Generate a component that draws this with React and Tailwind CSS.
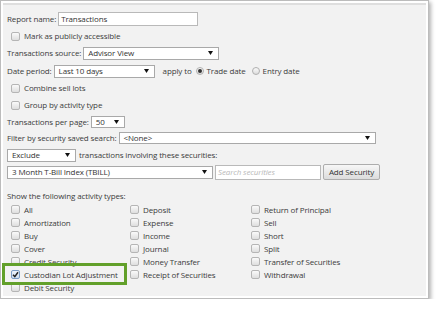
import React from "react";

const Arrow = () => (
  <svg width="5" height="4" viewBox="0 0 5 4" className="shrink-0">
    <polygon points="0,0 5,0 2.5,4" fill="#111" />
  </svg>
);

const Select = ({ value, className }) => (
  <div
    className={
      "flex items-center justify-between bg-white border border-[#a9a9a9] pl-[4px] pr-[5px] text-[#333] " +
      className
    }
  >
    <span className="whitespace-nowrap">{value}</span>
    <Arrow />
  </div>
);

const Box = ({ checked }) =>
  checked ? (
    <span className="w-[9px] h-[9px] rounded-[2px] border border-[#7a9cc6] bg-gradient-to-b from-[#eef4fb] to-[#cfdff2] flex items-center justify-center shrink-0">
      <svg width="7" height="7" viewBox="0 0 7 7">
        <path d="M1 3.8 L2.8 5.6 L6 1.2" stroke="#222" strokeWidth="1.5" fill="none" />
      </svg>
    </span>
  ) : (
    <span className="w-[9px] h-[9px] rounded-[2px] border border-[#b5b5b5] bg-gradient-to-b from-[#fafafa] to-[#dedede] shrink-0" />
  );

const Check = ({ label, checked }) => (
  <div className="flex items-center h-full">
    <Box checked={checked} />
    <span className="ml-[4px] whitespace-nowrap">{label}</span>
  </div>
);

const Radio = ({ checked }) => (
  <span className="w-[8px] h-[8px] rounded-full border border-[#b0b0b0] bg-gradient-to-b from-[#fafafa] to-[#dcdcdc] flex items-center justify-center shrink-0">
    {checked && <span className="w-[4px] h-[4px] rounded-full bg-[#333]" />}
  </span>
);

const cols = [
  ["All", "Amortization", "Buy", "Cover", "Credit Security", "Custodian Lot Adjustment", "Debit Security"],
  ["Deposit", "Expense", "Income", "Journal", "Money Transfer", "Receipt of Securities"],
  ["Return of Principal", "Sell", "Short", "Split", "Transfer of Securities", "Withdrawal"],
];

export default function App() {
  return (
    <div
      className="relative w-[429px] h-[299px] border border-[#bcbcbc] bg-white p-[2px] shadow-[2px_2px_4px_rgba(0,0,0,0.3)] text-[8px] tracking-[-0.13px] text-[#3c3c3c]"
      style={{ fontFamily: '"Open Sans", "Noto Sans", sans-serif' }}
    >
      <div className="h-full bg-[#f2f2f2] border-t-2 border-[#dedede] pl-[4px] pt-[5px] flex flex-col">
        <div className="h-[17px] flex items-center">
          <span>Report name:</span>
          <div className="ml-[2px] w-[140px] h-[14px] bg-white border border-[#b9b9b9] px-[2px] flex items-center text-[#333]">
            Transactions
          </div>
        </div>
        <div className="h-[18px] pl-[4px]">
          <Check label="Mark as publicly accessible" />
        </div>
        <div className="h-[16px] flex items-center">
          <span>Transactions source:</span>
          <Select value="Advisor View" className="ml-[2px] w-[136px] h-[13px]" />
        </div>
        <div className="h-[20px] flex items-center">
          <span>Date period:</span>
          <Select value="Last 10 days" className="ml-[2px] w-[101px] h-[13px]" />
          <span className="ml-[8px]">apply to</span>
          <span className="ml-[4px]"><Radio checked /></span>
          <span className="ml-[3px]">Trade date</span>
          <span className="ml-[6px]"><Radio /></span>
          <span className="ml-[3px]">Entry date</span>
        </div>
        <div className="h-[14px] pl-[4px]">
          <Check label="Combine sell lots" />
        </div>
        <div className="h-[20px] pl-[4px]">
          <Check label="Group by activity type" />
        </div>
        <div className="h-[13px] flex items-center">
          <span>Transactions per page:</span>
          <Select value="50" className="ml-[2px] w-[34px] h-[12px]" />
        </div>
        <div className="h-[19px] flex items-center">
          <span>Filter by security saved search:</span>
          <Select value="<None>" className="ml-[2px] w-[257px] h-[12px]" />
        </div>
        <div className="h-[16px] flex items-center">
          <Select value="Exclude" className="w-[69px] h-[13px]" />
          <span className="ml-[3px]">transactions involving these securities:</span>
        </div>
        <div className="h-[18px] flex items-center">
          <Select value="3 Month T-Bill Index (TBILL)" className="w-[206px] h-[13px]" />
          <div className="ml-[2px] w-[106px] h-[15px] bg-white border border-[#b9b9b9] px-[2px] flex items-center italic text-[#b8b8b8]">
            Search securities
          </div>
          <div className="ml-[2px] w-[57px] h-[16px] border border-[#adadad] rounded-[2px] bg-gradient-to-b from-[#f7f7f7] to-[#dcdcdc] flex items-center justify-center text-[#333]">
            Add Security
          </div>
        </div>
        <div className="mt-[8px] h-[14px] flex items-center">Show the following activity types:</div>
        <div className="grid grid-cols-[119px_121px_1fr] pl-[4px]">
          {cols.map((col, ci) => (
            <div key={ci} className="flex flex-col">
              {col.map((l) => (
                <div key={l} className="h-[13px]">
                  <Check label={l} checked={l === "Custodian Lot Adjustment"} />
                </div>
              ))}
            </div>
          ))}
        </div>
      </div>
      <div className="absolute left-[1px] top-[262px] w-[125px] h-[22px] border-[3px] border-[#62a02a]" />
    </div>
  );
}
